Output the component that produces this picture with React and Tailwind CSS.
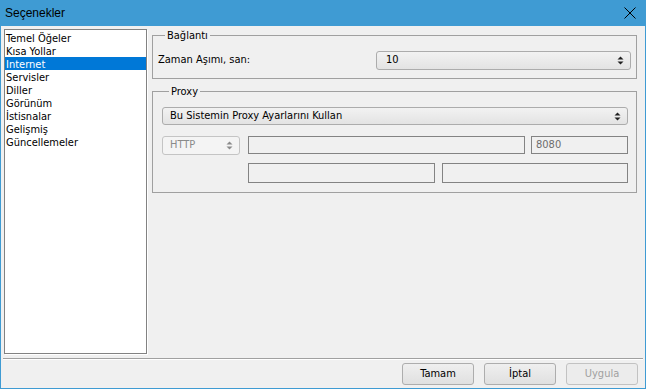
import React, { useState } from "react";

const font = { fontFamily: '"DejaVu Sans Condensed", "Liberation Sans", sans-serif' };

const pages = [
  "Temel Öğeler",
  "Kısa Yollar",
  "Internet",
  "Servisler",
  "Diller",
  "Görünüm",
  "İstisnalar",
  "Gelişmiş",
  "Güncellemeler",
];

// Small up/down arrows used by spin boxes and combo boxes
const UpDown = ({ color = "#202020" }) => (
  <svg width="7" height="9" viewBox="0 0 7 9" className="shrink-0">
    <path d="M3.5 0.5 L6.5 3.5 L0.5 3.5 Z" fill={color} />
    <path d="M3.5 8.5 L6.5 5.5 L0.5 5.5 Z" fill={color} />
  </svg>
);

const Combo = ({ children, disabled, className = "" }) => (
  <div
    className={`flex items-center justify-between rounded-[3px] border pl-[7px] pr-[6px] ${
      disabled
        ? "border-[#c4c4c4] bg-[#f4f4f4] text-[#8a8a8a]"
        : "border-[#acacac] bg-gradient-to-b from-[#f2f2f2] to-[#e3e3e3] text-black"
    } ${className}`}
  >
    <span>{children}</span>
    <UpDown color={disabled ? "#8a8a8a" : "#202020"} />
  </div>
);

const TextBox = ({ value, className = "" }) => (
  <div
    className={`flex items-center border border-[#838383] bg-[#f0f0f0] pl-[4px] text-[#6d6d6d] ${className}`}
  >
    {value}
  </div>
);

const Button = ({ children, disabled }) => (
  <button
    type="button"
    className={`h-[22px] w-[72px] rounded-[3px] border text-[11px] ${
      disabled
        ? "border-[#c2c2c2] bg-[#ececec] text-[#a0a0a0]"
        : "border-[#adadad] bg-gradient-to-b from-[#efefef] to-[#e0e0e0] text-black"
    }`}
    style={font}
  >
    {children}
  </button>
);

export default function App() {
  const [selected, setSelected] = useState(2);

  return (
    <div className="flex h-[389px] w-[646px] flex-col bg-[#3f9bd3]" style={font}>
      {/* title bar */}
      <div className="flex h-[26px] shrink-0 items-center justify-between pl-[5px] pr-[10px]">
        <span
          className="text-[12px] text-black"
          style={{ fontFamily: '"Liberation Sans", sans-serif' }}
        >
          Seçenekler
        </span>
        <svg width="12" height="12" viewBox="0 0 12 12">
          <path d="M0.5 0.5 L11.5 11.5 M11.5 0.5 L0.5 11.5" stroke="#000" strokeWidth="1" />
        </svg>
      </div>

      <div className="mx-px mb-px flex flex-1 flex-col bg-[#f0f0f0] text-[11px] text-black">
        <div className="flex pl-[3px] pt-[3px]">
          {/* page list */}
          <div className="h-[325px] w-[143px] shrink-0 border border-[#828282] bg-white py-px shadow-[1px_1px_0_#ffffff]">
            {pages.map((p, i) => (
              <div
                key={p}
                onClick={() => setSelected(i)}
                className={`h-[13px] overflow-hidden pl-px leading-[15px] ${
                  i === selected ? "bg-[#0078d7] text-white" : "text-black"
                }`}
              >
                {p}
              </div>
            ))}
          </div>

          {/* settings */}
          <div className="ml-[5px] flex w-[485px] flex-col">
            <fieldset className="border border-[#a0a0a0] px-[5px] pb-[8px] pt-[9px]">
              <legend className="ml-[7px] px-[2px] leading-[13px]">Bağlantı</legend>
              <div className="flex items-center justify-between">
                <span>Zaman Aşımı, san:</span>
                <Combo className="h-[19px] w-[255px] pl-[9px]">10</Combo>
              </div>
            </fieldset>

            <fieldset className="mt-[6px] border border-[#a0a0a0] pb-[9px] pl-[9px] pr-[8px] pt-[9px]">
              <legend className="ml-[7px] px-[2px] leading-[13px]">Proxy</legend>
              <Combo className="h-[18px]">Bu Sistemin Proxy Ayarlarını Kullan</Combo>
              <div className="mt-[11px] flex">
                <Combo disabled className="h-[19px] w-[78px]">
                  HTTP
                </Combo>
                <TextBox className="ml-[8px] h-[18px] flex-1" />
                <TextBox value="8080" className="ml-[6px] h-[18px] w-[97px]" />
              </div>
              <div className="ml-[86px] mt-[8px] flex gap-[7px]">
                <TextBox className="h-[20px] flex-1" />
                <TextBox className="h-[20px] flex-1" />
              </div>
            </fieldset>
          </div>
        </div>

        {/* separator */}
        <div className="mx-[2px] mt-[4px] h-[2px] border-b border-t border-b-white border-t-[#a0a0a0]" />

        {/* buttons */}
        <div className="mt-[3px] flex justify-end gap-[10px] pr-[7px]">
          <Button>Tamam</Button>
          <Button>İptal</Button>
          <Button disabled>Uygula</Button>
        </div>
      </div>
    </div>
  );
}
